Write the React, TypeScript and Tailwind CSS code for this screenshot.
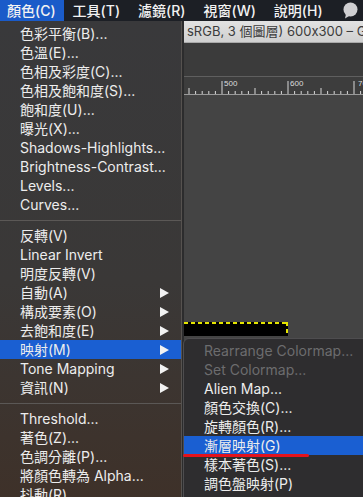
import React from 'react'

type Item = { label: string; arrow?: boolean; active?: boolean; disabled?: boolean } | 'sep'

const menuBar = [
  { label: '顏色(C)', active: true },
  { label: '工具(T)' },
  { label: '濾鏡(R)' },
  { label: '視窗(W)' },
  { label: '說明(H)' },
]

const colorItems: Item[] = [
  { label: '色彩平衡(B)...' },
  { label: '色溫(E)...' },
  { label: '色相及彩度(C)...' },
  { label: '色相及飽和度(S)...' },
  { label: '飽和度(U)...' },
  { label: '曝光(X)...' },
  { label: 'Shadows-Highlights...' },
  { label: 'Brightness-Contrast...' },
  { label: 'Levels...' },
  { label: 'Curves...' },
  'sep',
  { label: '反轉(V)' },
  { label: 'Linear Invert' },
  { label: '明度反轉(V)' },
  { label: '自動(A)', arrow: true },
  { label: '構成要素(O)', arrow: true },
  { label: '去飽和度(E)', arrow: true },
  { label: '映射(M)', arrow: true, active: true },
  { label: 'Tone Mapping', arrow: true },
  { label: '資訊(N)', arrow: true },
  'sep',
  { label: 'Threshold...' },
  { label: '著色(Z)...' },
  { label: '色調分離(P)...' },
  { label: '將顏色轉為 Alpha...' },
  { label: '抖動(R)...' },
]

const mapItems: Item[] = [
  { label: 'Rearrange Colormap...', disabled: true },
  { label: 'Set Colormap...', disabled: true },
  { label: 'Alien Map...' },
  { label: '顏色交換(C)...' },
  { label: '旋轉顏色(R)...' },
  { label: '漸層映射(G)', active: true },
  { label: '樣本著色(S)...' },
  { label: '調色盤映射(P)' },
]

function Arrow() {
  return (
    <svg width="9" height="10" viewBox="0 0 9 10" className="shrink-0">
      <path d="M0 0 L9 5 L0 10 Z" fill="#f2f2f2" />
    </svg>
  )
}

function MenuRows({ items }: { items: Item[] }) {
  return (
    <>
      {items.map((item, i) =>
        item === 'sep' ? (
          <div key={i} className="flex h-[12px] shrink-0 items-center">
            <div className="h-px w-full bg-[#5b5856]" />
          </div>
        ) : (
          <div
            key={i}
            className={`flex h-[19px] shrink-0 items-center justify-between pl-[20px] pr-[12px] ${
              item.active ? 'bg-[#1a5fd2]' : ''
            } ${item.disabled ? 'text-[#6c6c6e]' : 'text-[#ededed]'}`}
          >
            <span className="whitespace-nowrap">{item.label}</span>
            {item.arrow && <Arrow />}
          </div>
        )
      )}
    </>
  )
}

function Ruler() {
  const ticks = []
  for (let k = 0; k < 32; k++) {
    const x = 38 - 66 + k * 6.6
    if (x < 0 || x > 180) continue
    const h = k % 10 === 0 ? 13 : k % 5 === 0 ? 6 : 3
    ticks.push(<line key={k} x1={x} x2={x} y1={17 - h} y2={17} stroke="#d8d8d8" strokeWidth="1" />)
  }
  return (
    <svg width="180" height="18" viewBox="0 0 180 18">
      {ticks}
      <line x1="0" x2="180" y1="17.5" y2="17.5" stroke="#9a9a9a" strokeWidth="1" />
      <text x="40" y="9" fontSize="8" fill="#dcdcdc" fontFamily="Liberation Sans, sans-serif">500</text>
      <text x="106" y="9" fontSize="8" fill="#dcdcdc" fontFamily="Liberation Sans, sans-serif">600</text>
      <text x="174" y="9" fontSize="8" fill="#dcdcdc" fontFamily="Liberation Sans, sans-serif">70</text>
    </svg>
  )
}

export default function App() {
  return (
    <div className="relative h-[497px] w-[363px] overflow-hidden bg-[#3a3a3a] font-['Inter','Noto_Sans_CJK_TC',sans-serif] text-[14px] leading-none">
      {/* menu bar */}
      <div className="flex h-[21px] items-center bg-[#1c1f25] text-[#f2f2f2]">
        {menuBar.map((m, i) => (
          <div
            key={i}
            className={`flex h-full items-center whitespace-nowrap font-medium ${
              i === 0 ? 'pl-[7px] pr-[8px]' : 'px-[9px]'
            } ${m.active ? 'bg-[#1a5bc9]' : ''}`}
          >
            {m.label}
          </div>
        ))}
        <div className="ml-auto mr-[5px] flex items-center">
          <svg width="15" height="17" viewBox="0 0 15 17">
            <circle cx="7.5" cy="7.5" r="7" fill="#cfcfd2" />
            <path d="M3 12 L2 16.5 L7 13.5 Z" fill="#cfcfd2" />
          </svg>
        </div>
      </div>

      <div className="flex h-[476px]">
        {/* colour menu */}
        <div className="flex w-[182px] shrink-0 flex-col border-r border-[#56524f] bg-linear-to-b from-[#39393b] via-[#3a3837] via-55% to-[#3e3129] pt-[3px]">
          <MenuRows items={colorItems} />
        </div>

        {/* gimp window behind */}
        <div className="flex min-w-0 flex-1 flex-col border-l-2 border-[#2c2c2d]">
          <div className="flex h-[22px] shrink-0 items-center overflow-hidden whitespace-nowrap border-b border-[#a9a9a9] bg-linear-to-b from-[#e2e2e2] to-[#d0d0d0] pl-[3px] text-[13px] text-[#3c3c3c]">
            sRGB, 3 個圖層) 600x300 – G
          </div>
          <div className="h-[33px] shrink-0 bg-[#3b3b3b]" />
          <div className="h-[19px] shrink-0 border-t border-[#5f5f5f] bg-[#3d3d3d]">
            <Ruler />
          </div>
          <div className="flex-1 bg-[#444444]">
            <div className="relative mt-[227px] h-[14px] w-[104px] bg-black">
              <svg className="absolute inset-0" width="104" height="14" viewBox="0 0 104 14">
                <line x1="0" x2="104" y1="1" y2="1" stroke="#e6e600" strokeWidth="2" strokeDasharray="4 3" />
                <line x1="103" x2="103" y1="0" y2="14" stroke="#e6e600" strokeWidth="2" strokeDasharray="4 3" />
              </svg>
            </div>
          </div>
        </div>
      </div>

      {/* mapping submenu */}
      <div className="absolute left-[183px] top-[338px] h-[180px] w-[200px] rounded-tl-[6px] border border-[#4e4d4f] bg-[#2e2d2f] pt-[2px]">
        <MenuRows items={mapItems} />
      </div>
      <div className="absolute left-[183px] top-[454px] h-[3px] w-[126px] rounded-full bg-[#e3121c]" />
    </div>
  )
}
